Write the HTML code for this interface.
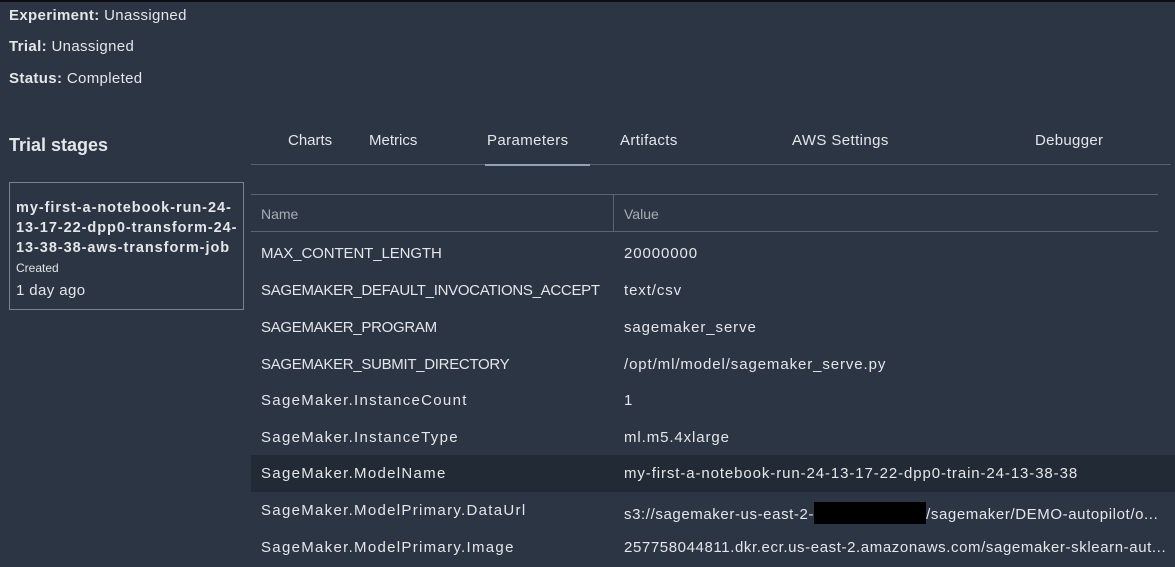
<!DOCTYPE html>
<html><head><style>
body{margin:0;width:1175px;height:567px;background:#2c3544;font-family:"Liberation Sans",sans-serif;color:#e4e6e8;position:relative;overflow:hidden;font-size:15px}
.a{position:absolute;white-space:nowrap}
b{font-weight:bold}
.row{position:absolute;left:251px;width:924px;height:37px}
.row span{position:absolute;top:10px;white-space:nowrap}
.row span+span{letter-spacing:0.9px}
.lc{letter-spacing:1.3px}
</style></head><body>
<div class="a" style="left:0;top:0;width:1175px;height:2px;background:#0d0f12"></div>
<div class="a" style="left:9px;top:7px;letter-spacing:0.35px"><b>Experiment:</b> Unassigned</div>
<div class="a" style="left:9px;top:38px;letter-spacing:0.35px"><b>Trial:</b> Unassigned</div>
<div class="a" style="left:9px;top:70px;letter-spacing:0.35px"><b>Status:</b> Completed</div>
<div class="a" style="left:9px;top:135px;font-size:18px;font-weight:bold">Trial stages</div>
<div class="a" style="left:9px;top:182px;width:235px;height:128px;border:1px solid #7a8290;box-sizing:border-box"></div>
<div class="a" style="left:16px;top:198px;font-size:14.5px;font-weight:bold;line-height:20px;letter-spacing:0.95px">my-first-a-notebook-run-24-<br>13-17-22-dpp0-transform-24-<br>13-38-38-aws-transform-job</div>
<div class="a" style="left:16px;top:261px;font-size:12px">Created</div>
<div class="a" style="left:16px;top:282px;font-size:15px;letter-spacing:0.4px">1 day ago</div>
<div class="a" style="left:288px;top:132px">Charts</div>
<div class="a" style="left:369px;top:132px">Metrics</div>
<div class="a" style="left:487px;top:132px;letter-spacing:0.4px">Parameters</div>
<div class="a" style="left:620px;top:132px;letter-spacing:0.4px">Artifacts</div>
<div class="a" style="left:792px;top:132px;letter-spacing:0.4px">AWS Settings</div>
<div class="a" style="left:1035px;top:132px;letter-spacing:0.3px">Debugger</div>
<div class="a" style="left:251px;top:164px;width:920px;height:1px;background:#556070"></div>
<div class="a" style="left:485px;top:164px;width:105px;height:2px;background:#8fa3b5"></div>
<div class="a" style="left:251px;top:194px;width:907px;height:1px;background:#5a6472"></div>
<div class="a" style="left:251px;top:231px;width:907px;height:1px;background:#5a6472"></div>
<div class="a" style="left:613px;top:194px;width:1px;height:37px;background:#5a6472"></div>
<div class="a" style="left:261px;top:206px;font-size:14px;color:#a7adb5">Name</div>
<div class="a" style="left:624px;top:206px;font-size:14px;color:#a7adb5">Value</div>
<div class="row" style="top:235px"><span style="left:10px;letter-spacing:-0.1px">MAX_CONTENT_LENGTH</span><span style="left:373px">20000000</span></div>
<div class="row" style="top:272px"><span style="left:10px;letter-spacing:-0.3px">SAGEMAKER_DEFAULT_INVOCATIONS_ACCEPT</span><span style="left:373px">text/csv</span></div>
<div class="row" style="top:309px"><span style="left:10px;letter-spacing:-0.3px">SAGEMAKER_PROGRAM</span><span style="left:373px">sagemaker_serve</span></div>
<div class="row" style="top:346px"><span style="left:10px;letter-spacing:-0.3px">SAGEMAKER_SUBMIT_DIRECTORY</span><span style="left:373px">/opt/ml/model/sagemaker_serve.py</span></div>
<div class="row" style="top:382px"><span class="lc" style="left:10px">SageMaker.InstanceCount</span><span style="left:373px">1</span></div>
<div class="row" style="top:419px"><span class="lc" style="left:10px">SageMaker.InstanceType</span><span style="left:373px">ml.m5.4xlarge</span></div>
<div class="row" style="top:455px;background:#222a35"><span class="lc" style="left:10px">SageMaker.ModelName</span><span style="left:373px">my-first-a-notebook-run-24-13-17-22-dpp0-train-24-13-38-38</span></div>
<div class="row" style="top:492px"><span class="lc" style="left:10px">SageMaker.ModelPrimary.DataUrl</span><span style="left:373px;letter-spacing:0.6px">s3://sagemaker-us-east-2-<i style="display:inline-block;width:112px;height:22px;background:#000;vertical-align:-5px"></i>/sagemaker/DEMO-autopilot/o...</span></div>
<div class="row" style="top:529px"><span class="lc" style="left:10px">SageMaker.ModelPrimary.Image</span><span style="left:373px;letter-spacing:0.6px">257758044811.dkr.ecr.us-east-2.amazonaws.com/sagemaker-sklearn-aut...</span></div>
</body></html>
